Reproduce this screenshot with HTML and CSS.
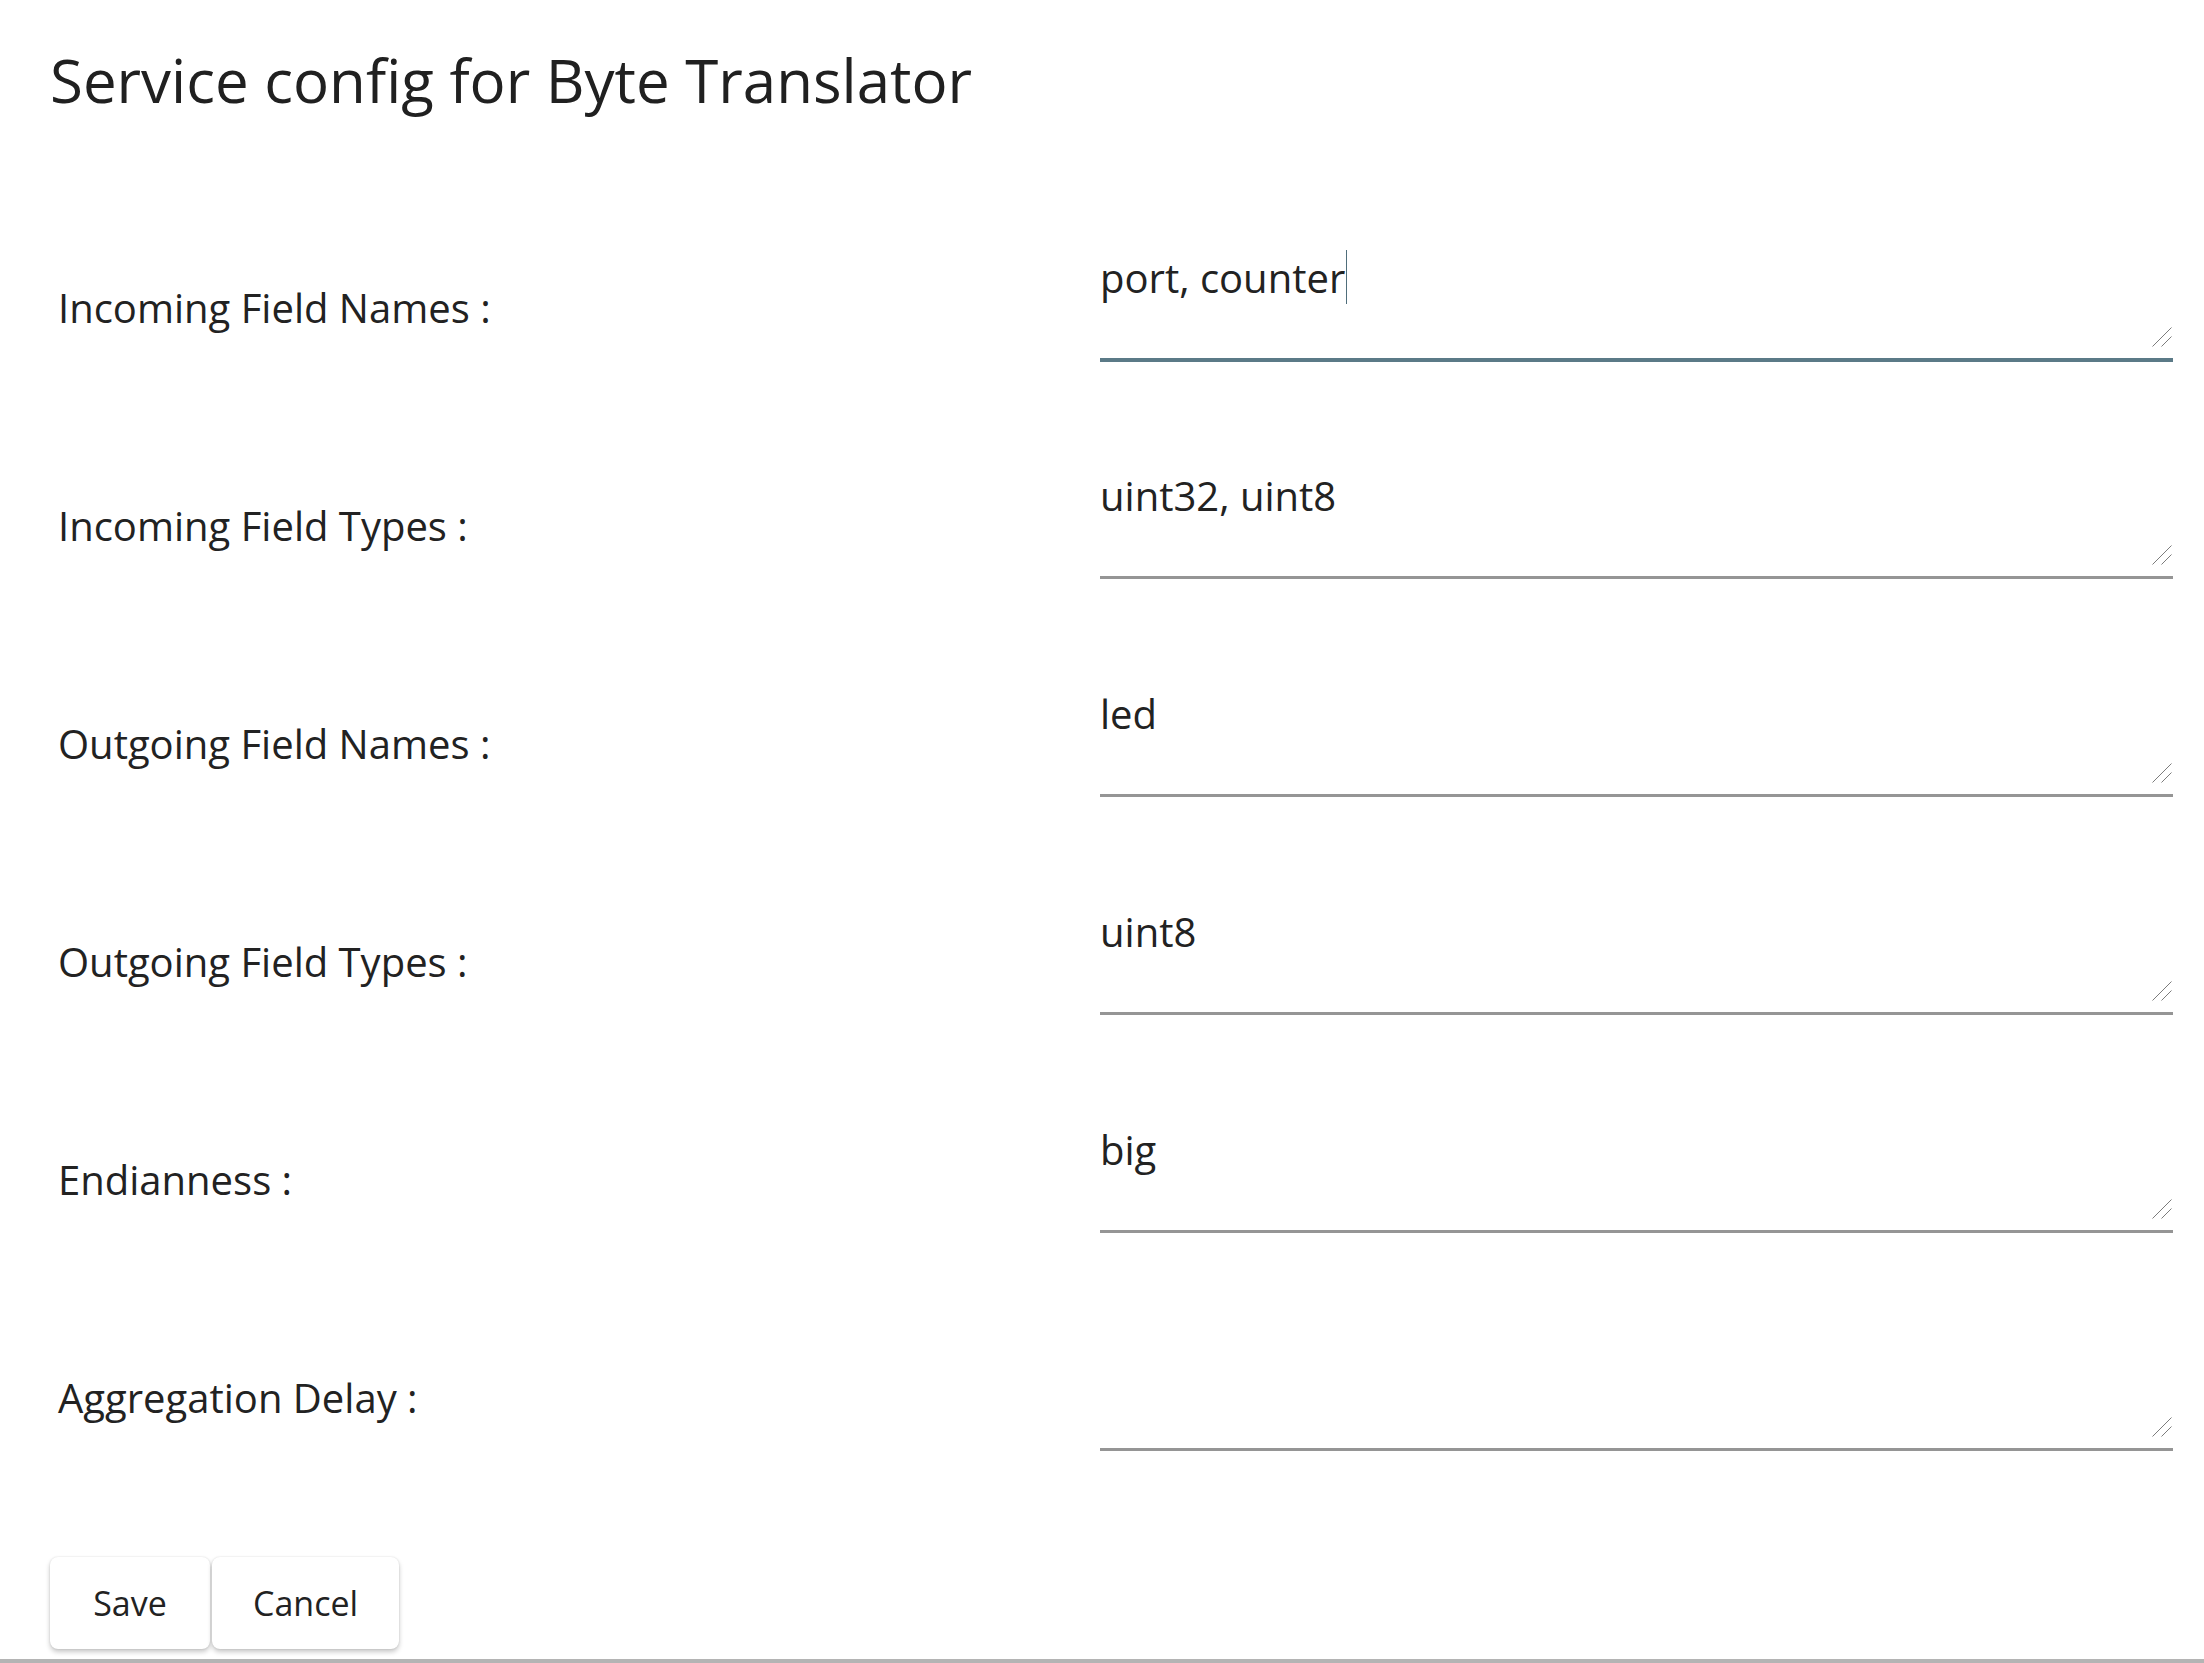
FILE: index.html
```html
<!DOCTYPE html>
<html lang="en">
<head>
<meta charset="utf-8">
<title>Service config for Byte Translator</title>
<link rel="stylesheet" href="styles.css">
</head>
<body>
<div class="page">
  <h1 class="title">Service config for Byte Translator</h1>
  <form class="form">
    <div class="row">
      <label class="label" for="f1">Incoming Field Names :</label>
      <div class="field focused">
        <textarea id="f1" class="input">port, counter</textarea>
        <span class="caret"></span>
        <svg class="grip" width="20" height="20" viewBox="0 0 20 20"><path d="M0.5 19.5 L19.5 0.5 M9.5 19.5 L19.5 9.5"/></svg>
        <div class="underline"></div>
      </div>
    </div>
    <div class="row">
      <label class="label" for="f2">Incoming Field Types :</label>
      <div class="field">
        <textarea id="f2" class="input">uint32, uint8</textarea>
        <svg class="grip" width="20" height="20" viewBox="0 0 20 20"><path d="M0.5 19.5 L19.5 0.5 M9.5 19.5 L19.5 9.5"/></svg>
        <div class="underline"></div>
      </div>
    </div>
    <div class="row">
      <label class="label" for="f3">Outgoing Field Names :</label>
      <div class="field">
        <textarea id="f3" class="input">led</textarea>
        <svg class="grip" width="20" height="20" viewBox="0 0 20 20"><path d="M0.5 19.5 L19.5 0.5 M9.5 19.5 L19.5 9.5"/></svg>
        <div class="underline"></div>
      </div>
    </div>
    <div class="row">
      <label class="label" for="f4">Outgoing Field Types :</label>
      <div class="field">
        <textarea id="f4" class="input">uint8</textarea>
        <svg class="grip" width="20" height="20" viewBox="0 0 20 20"><path d="M0.5 19.5 L19.5 0.5 M9.5 19.5 L19.5 9.5"/></svg>
        <div class="underline"></div>
      </div>
    </div>
    <div class="row">
      <label class="label" for="f5">Endianness :</label>
      <div class="field">
        <textarea id="f5" class="input">big</textarea>
        <svg class="grip" width="20" height="20" viewBox="0 0 20 20"><path d="M0.5 19.5 L19.5 0.5 M9.5 19.5 L19.5 9.5"/></svg>
        <div class="underline"></div>
      </div>
    </div>
    <div class="row">
      <label class="label" for="f6">Aggregation Delay :</label>
      <div class="field">
        <textarea id="f6" class="input"></textarea>
        <svg class="grip" width="20" height="20" viewBox="0 0 20 20"><path d="M0.5 19.5 L19.5 0.5 M9.5 19.5 L19.5 9.5"/></svg>
        <div class="underline"></div>
      </div>
    </div>
  </form>
  <div class="actions">
    <button class="btn" type="button">Save</button>
    <button class="btn" type="button">Cancel</button>
  </div>
</div>
<div class="bottom-bar"></div>
</body>
</html>
```

FILE: styles.css
```css
html, body {
  margin: 0;
  padding: 0;
  background: #ffffff;
}

body {
  font-family: "Open Sans", "Noto Sans", "DejaVu Sans", sans-serif;
  color: #222222;
}

.page {
  padding: 0 31px 0 50px;
}

.title {
  margin: 39px 0 0 0;
  font-size: 60px;
  line-height: 82px;
  font-weight: 500;
  color: #202020;
}

.form {
  margin-top: 75px;
}

.row {
  display: flex;
  align-items: center;
  padding: 53px 0;
}

.label {
  width: 1042px;
  flex: none;
  padding-left: 8px;
  padding-top: 5px;
  font-size: 40px;
  line-height: 52px;
  font-weight: 400;
  color: #222222;
}

.field {
  flex: 1;
  position: relative;
}

.input {
  display: block;
  width: 100%;
  height: 104px;
  box-sizing: border-box;
  margin: 0;
  padding: 3px 0 0 0;
  border: none;
  outline: none;
  resize: none;
  overflow: hidden;
  background: transparent;
  font-family: inherit;
  font-size: 40px;
  line-height: 52px;
  color: #222222;
}

.underline {
  margin-top: 5px;
  height: 3px;
  background: #959595;
}

.focused .underline {
  height: 4px;
  margin-bottom: -1px;
  background: #5b7a87;
}

.caret {
  position: absolute;
  left: 246px;
  top: 1px;
  width: 1px;
  height: 54px;
  background: #4f6e7b;
}

.grip {
  position: absolute;
  right: 1px;
  bottom: 14px;
  fill: none;
  stroke: #7c7c7c;
  stroke-width: 1;
}

.actions {
  display: flex;
  gap: 2px;
  margin-top: 53px;
}

.btn {
  height: 92px;
  min-width: 160px;
  padding: 0 41px;
  border: none;
  border-radius: 8px;
  background: #ffffff;
  box-shadow: 0 3px 5px rgba(0, 0, 0, 0.22), 0 0 2px rgba(0, 0, 0, 0.12);
  font-family: inherit;
  font-size: 34px;
  color: #222222;
  cursor: pointer;
}

.bottom-bar {
  margin-top: 10px;
  height: 4px;
  background: #b4b4b4;
}
```
